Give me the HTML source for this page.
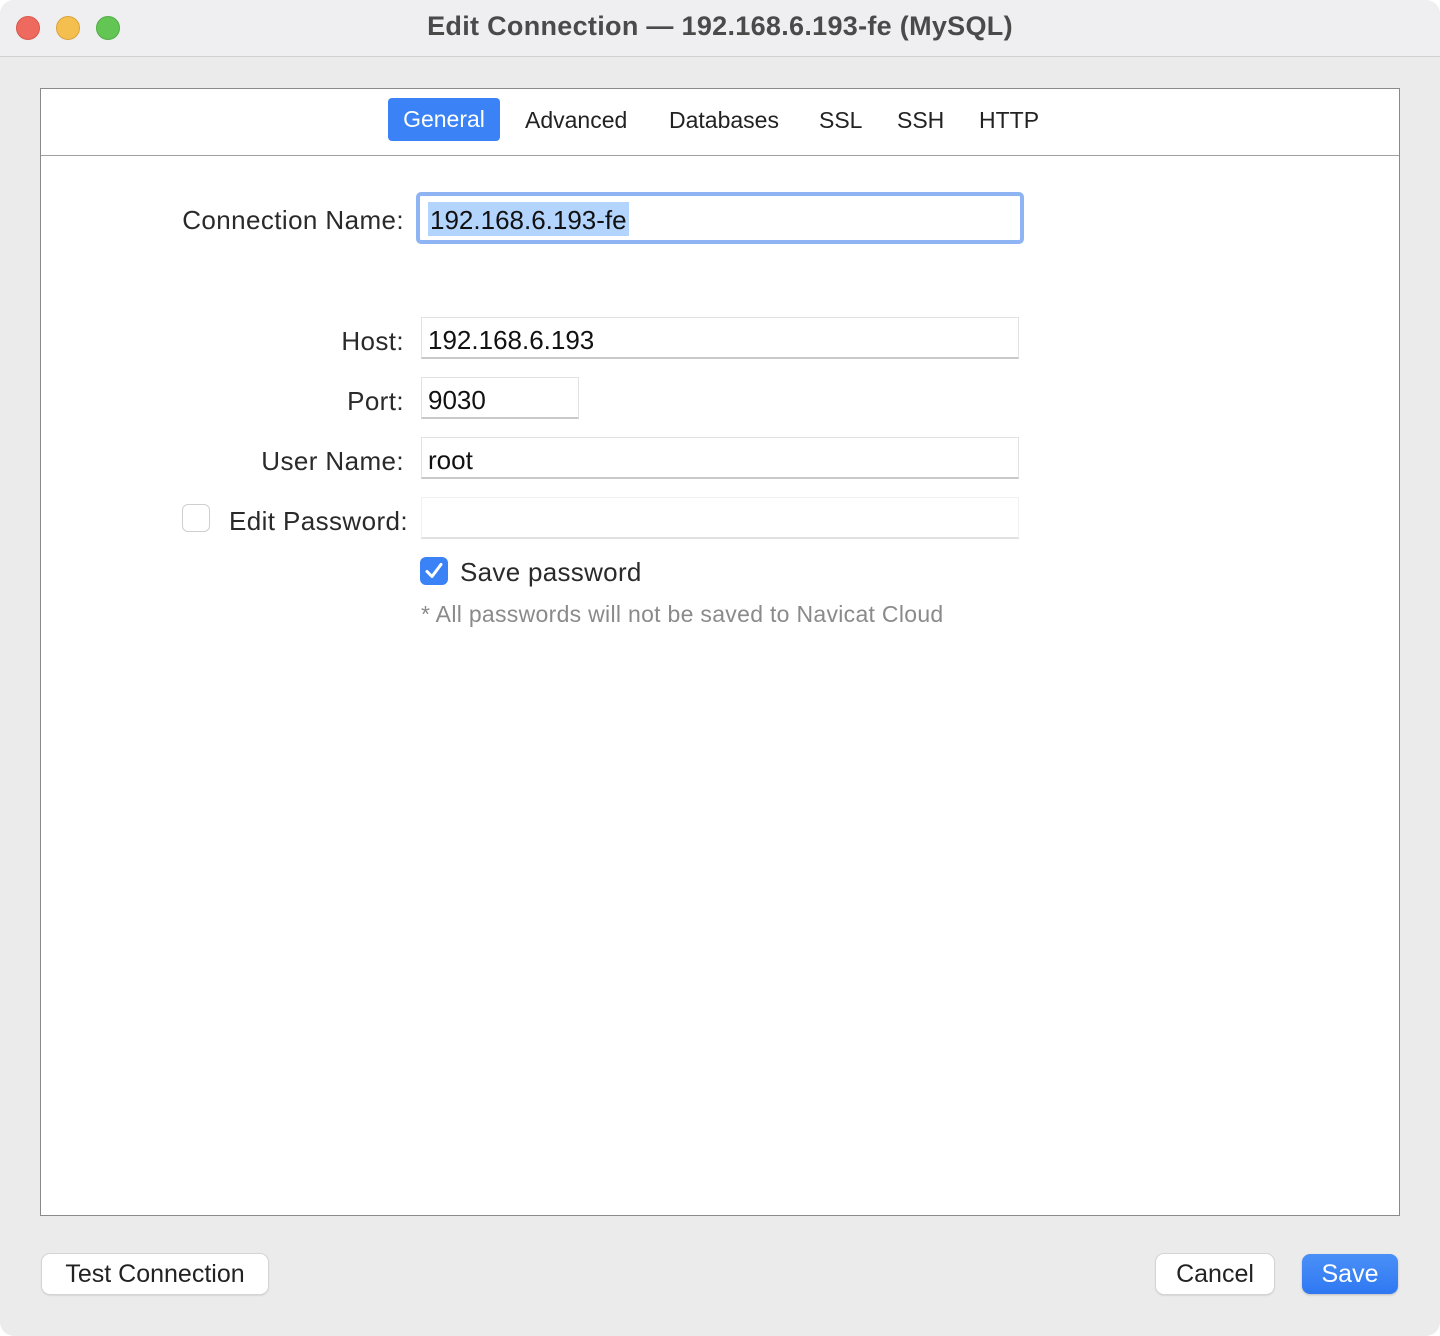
<!DOCTYPE html>
<html><head><style>
*{margin:0;padding:0;box-sizing:border-box}
body{width:1440px;height:1336px;background:#fff;font-family:"Liberation Sans",Arial,sans-serif;color:#222;position:relative;overflow:hidden}
.win{position:absolute;left:0;top:0;width:1440px;height:1336px;background:#ebebeb;border-radius:14px;overflow:hidden}
.tb{position:absolute;left:0;top:0;width:1440px;height:57px;background:#efeef1;border-bottom:1px solid #d0d0d0}
.dot{position:absolute;top:16px;width:24px;height:24px;border-radius:50%}
.title{position:absolute;left:0;width:1440px;top:11px;text-align:center;font-weight:bold;font-size:27px;letter-spacing:0.3px;color:#4a4a4a}
.panel{position:absolute;left:40px;top:88px;width:1360px;height:1128px;background:#fff;border:1px solid #8a8a8a}
.tabline{position:absolute;left:0;top:66px;width:1358px;height:1px;background:#a0a0a0}
.tab{position:absolute;top:20px;height:32px;font-size:23px;line-height:32px;color:#222}
.lbl{position:absolute;font-size:26px;letter-spacing:0.4px;text-align:right;right:1036px;color:#2a2a2a}
.inp{position:absolute;background:#fff;border:1px solid #e2e2e2;border-bottom:2px solid #c9c9c9;font-size:26px;padding-left:6px;line-height:44px;color:#111}
.btn{position:absolute;top:1254px;height:40px;border-radius:8px;background:#fff;box-shadow:0 0 0 1px #d4d4d4,0 1px 2px rgba(0,0,0,.2);font-size:25px;line-height:40px;text-align:center;color:#222}
</style></head><body>
<div class="win">
<div class="tb">
<div class="dot" style="left:16px;background:#ee6a5f;border:1px solid #d9574c"></div>
<div class="dot" style="left:56px;background:#f5bf4f;border:1px solid #d9a33b"></div>
<div class="dot" style="left:96px;background:#62c554;border:1px solid #4fae43"></div>
<div class="title">Edit Connection — 192.168.6.193-fe (MySQL)</div>
</div>
<div class="panel">
<div class="tab" style="left:347px;width:112px;top:9px;height:43px;line-height:43px;background:#3a82f6;color:#fff;border-radius:4px;text-align:center">General</div>
<div class="tab" style="left:484px;top:15px">Advanced</div>
<div class="tab" style="left:628px;top:15px">Databases</div>
<div class="tab" style="left:778px;top:15px">SSL</div>
<div class="tab" style="left:856px;top:15px">SSH</div>
<div class="tab" style="left:938px;top:15px">HTTP</div>
<div class="tabline"></div>
</div>
<div class="lbl" style="top:205px">Connection Name:</div>
<div style="position:absolute;left:416px;top:192px;width:608px;height:52px;border:4px solid #8fb4f4;border-radius:5px;background:#fff"><div style="position:absolute;left:8px;top:6px;height:34px;padding:0 2px;background:#b3d4fd;font-size:26px;line-height:36px;color:#111">192.168.6.193-fe</div></div>
<div class="lbl" style="top:326px">Host:</div>
<div class="inp" style="left:421px;top:317px;width:598px;height:42px">192.168.6.193</div>
<div class="lbl" style="top:386px">Port:</div>
<div class="inp" style="left:421px;top:377px;width:158px;height:42px">9030</div>
<div class="lbl" style="top:446px">User Name:</div>
<div class="inp" style="left:421px;top:437px;width:598px;height:42px">root</div>
<div style="position:absolute;left:182px;top:504px;width:28px;height:28px;border:1px solid #cfcfcf;border-radius:6px;background:#fff"></div>
<div class="lbl" style="top:506px;right:1032px">Edit Password:</div>
<div class="inp" style="left:421px;top:497px;width:598px;height:42px;border-color:#f0f0f0;border-bottom-color:#e0e0e0"></div>
<div style="position:absolute;left:420px;top:557px;width:28px;height:28px;border-radius:6px;background:#3a82f6"><svg width="28" height="28" viewBox="0 0 28 28"><path d="M7 14.5l5 5 9-12" stroke="#fff" stroke-width="3" fill="none" stroke-linecap="round" stroke-linejoin="round"/></svg></div>
<div style="position:absolute;left:460px;top:557px;font-size:26px;letter-spacing:0.3px;color:#2a2a2a">Save password</div>
<div style="position:absolute;left:421px;top:601px;font-size:23px;letter-spacing:0.3px;color:#8a8a8a">* All passwords will not be saved to Navicat Cloud</div>
<div class="btn" style="left:42px;width:226px">Test Connection</div>
<div class="btn" style="left:1156px;width:118px">Cancel</div>
<div class="btn" style="left:1302px;width:96px;background:linear-gradient(#4a90f7,#2f78f2);color:#fff;box-shadow:0 1px 2px rgba(0,0,0,.2)">Save</div>
</div>
</body></html>
